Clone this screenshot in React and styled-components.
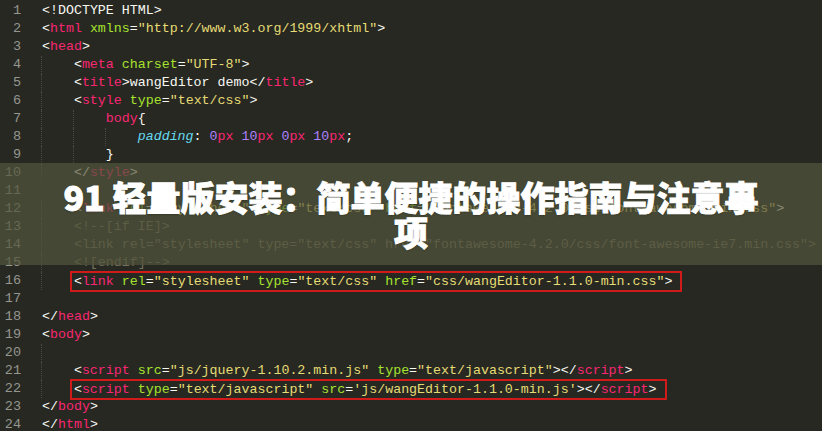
import React from 'react'
import styled, { createGlobalStyle } from 'styled-components'

const GlobalStyle = createGlobalStyle`
  html, body {
    margin: 0;
    padding: 0;
    background: #272822;
  }
  body {
    width: 822px;
    height: 431px;
    overflow: hidden;
  }
`

const colors = {
  p: '#f8f8f2',
  t: '#f92672',
  a: '#a6e22e',
  s: '#e6db74',
  c: '#75715e',
  k: '#66d9ef',
  n: '#ae81ff',
  u: '#f92672',
}

// [indent, tokens, boxed]
const lines = [
  [0, [['p', '<!DOCTYPE HTML>']]],
  [0, [['p', '<'], ['t', 'html'], ['p', ' '], ['a', 'xmlns'], ['p', '='], ['s', '"http://www.w3.org/1999/xhtml"'], ['p', '>']]],
  [0, [['p', '<'], ['t', 'head'], ['p', '>']]],
  [1, [['p', '<'], ['t', 'meta'], ['p', ' '], ['a', 'charset'], ['p', '='], ['s', '"UTF-8"'], ['p', '>']]],
  [1, [['p', '<'], ['t', 'title'], ['p', '>wangEditor demo</'], ['t', 'title'], ['p', '>']]],
  [1, [['p', '<'], ['t', 'style'], ['p', ' '], ['a', 'type'], ['p', '='], ['s', '"text/css"'], ['p', '>']]],
  [2, [['t', 'body'], ['p', '{']]],
  [3, [['k', 'padding'], ['p', ': '], ['n', '0'], ['u', 'px'], ['p', ' '], ['n', '10'], ['u', 'px'], ['p', ' '], ['n', '0'], ['u', 'px'], ['p', ' '], ['n', '10'], ['u', 'px'], ['p', ';']]],
  [2, [['p', '}']]],
  [1, [['p', '</'], ['t', 'style'], ['p', '>']]],
  [0, []],
  [1, [['p', '<'], ['t', 'link'], ['p', ' '], ['a', 'rel'], ['p', '='], ['s', '"stylesheet"'], ['p', ' '], ['a', 'type'], ['p', '='], ['s', '"text/css"'], ['p', ' '], ['a', 'href'], ['p', '='], ['s', '"fontawesome-4.2.0/css/font-awesome.min.css"'], ['p', '>']]],
  [1, [['c', '<!--[if IE]>']]],
  [1, [['c', '<link rel="stylesheet" type="text/css" href="fontawesome-4.2.0/css/font-awesome-ie7.min.css">']]],
  [1, [['c', '<![endif]-->']]],
  [1, [['p', '<'], ['t', 'link'], ['p', ' '], ['a', 'rel'], ['p', '='], ['s', '"stylesheet"'], ['p', ' '], ['a', 'type'], ['p', '='], ['s', '"text/css"'], ['p', ' '], ['a', 'href'], ['p', '='], ['s', '"css/wangEditor-1.1.0-min.css"'], ['p', '>']], true],
  [0, []],
  [0, [['p', '</'], ['t', 'head'], ['p', '>']]],
  [0, [['p', '<'], ['t', 'body'], ['p', '>']]],
  [1, []],
  [1, [['p', '<'], ['t', 'script'], ['p', ' '], ['a', 'src'], ['p', '='], ['s', '"js/jquery-1.10.2.min.js"'], ['p', ' '], ['a', 'type'], ['p', '='], ['s', '"text/javascript"'], ['p', '></'], ['t', 'script'], ['p', '>']]],
  [1, [['p', '<'], ['t', 'script'], ['p', ' '], ['a', 'type'], ['p', '='], ['s', '"text/javascript"'], ['p', ' '], ['a', 'src'], ['p', '='], ['s', "'js/wangEditor-1.1.0-min.js'"], ['p', '></'], ['t', 'script'], ['p', '>']], true],
  [0, [['p', '</'], ['t', 'body'], ['p', '>']]],
  [0, [['p', '</'], ['t', 'html'], ['p', '>']]],
]

const App = () => {
  return (
    <>
      <GlobalStyle />
      <Editor>
        {lines.map(([indent, tokens, boxed], i) => (
          <Row key={i}>
            <LineNo>{i + 1}</LineNo>
            <Code>
              {Array.from({ length: indent }).map((_, j) => (
                <Guide key={j} />
              ))}
              {boxed ? (
                <Marked>
                  {tokens.map(([type, text], j) => (
                    <Token key={j} $type={type}>{text}</Token>
                  ))}
                </Marked>
              ) : (
                tokens.map(([type, text], j) => (
                  <Token key={j} $type={type}>{text}</Token>
                ))
              )}
            </Code>
          </Row>
        ))}
        <Banner>
          <Title>91 轻量版安装：简单便捷的操作指南与注意事项</Title>
        </Banner>
      </Editor>
    </>
  )
}

const Editor = styled.div`
  position: relative;
  box-sizing: border-box;
  width: 822px;
  height: 431px;
  padding-top: 2px;
  overflow: hidden;
  background: #272822;
  font-family: "Liberation Mono", "DejaVu Sans Mono", monospace;
  font-size: 13.3px;
`

const Row = styled.div`
  display: grid;
  grid-template-columns: 21px 1fr;
  column-gap: 21px;
  height: 18px;
  line-height: 18px;
  white-space: pre;
`

const LineNo = styled.span`
  text-align: right;
  color: #95968f;
  font-size: 13.5px;
`

const Code = styled.div`
  display: flex;
  align-items: center;
  height: 18px;
`

const Guide = styled.span`
  display: inline-block;
  flex: none;
  width: 4ch;
  height: 18px;
  box-sizing: border-box;
  margin-left: -1px;
  margin-right: 1px;
  border-left: 1px dotted #4a4b44;
`

const Marked = styled.span`
  display: inline-block;
  margin-left: -4px;
  padding: 0 8px 0 2px;
  height: 17px;
  line-height: 17px;
  border: 2px solid #d11a1a;
`

const Token = styled.span`
  color: ${(p) => colors[p.$type]};
  font-style: ${(p) => (p.$type === 'k' ? 'italic' : 'normal')};
`

const Banner = styled.div`
  position: absolute;
  left: 0;
  right: 0;
  top: 163px;
  height: 102px;
  display: flex;
  align-items: center;
  justify-content: center;
  background: rgba(82, 85, 60, 0.7);
`

const Title = styled.h1`
  margin: 0;
  width: 720px;
  text-align: center;
  color: #ffffff;
  font-family: "Noto Sans CJK SC", "Noto Sans", sans-serif;
  font-weight: 900;
  font-size: 34px;
  line-height: 35px;
  -webkit-text-stroke: 0.9px #ffffff;
  text-shadow: 0 1px 2px rgba(0, 0, 0, 0.3);
`

export default App
